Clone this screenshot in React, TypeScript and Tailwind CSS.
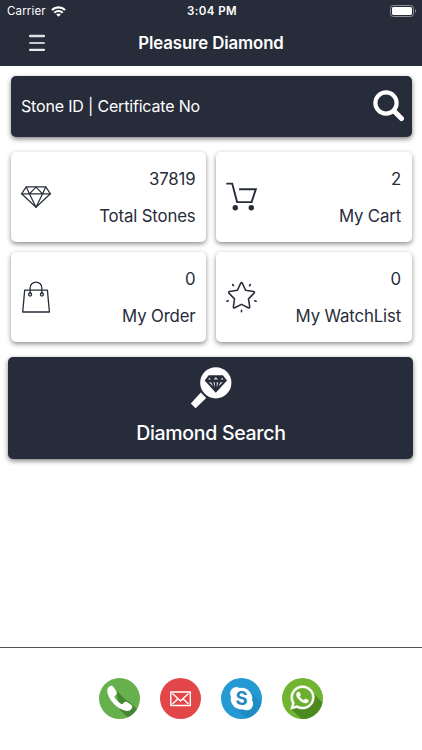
import type { ReactNode } from 'react'
import { FaWhatsapp } from 'react-icons/fa'

const DARK = '#272c3a'

const WifiIcon = () => (
  <svg width="15" height="11" viewBox="0 0 15 11" fill="none" stroke="#fff" strokeWidth="2.2">
    <path d="M.9 4.1a9.3 9.3 0 0 1 13.2 0" />
    <path d="M3.3 6.7a6 6 0 0 1 8.4 0" />
    <path d="M7.5 10.8 5.2 8.5a3.3 3.3 0 0 1 4.6 0z" fill="#fff" stroke="none" />
  </svg>
)

const BatteryIcon = () => (
  <svg width="27" height="12" viewBox="0 0 27 12" fill="none">
    <rect x="0.5" y="0.5" width="23" height="11" rx="2.8" stroke="#8b8e96" />
    <rect x="2" y="2" width="20" height="8" rx="1.4" fill="#fff" />
    <path d="M25 4v4c1.4-.5 1.4-3.5 0-4z" fill="#8b8e96" />
  </svg>
)

const MenuIcon = () => (
  <svg width="16" height="18" viewBox="0 0 16 18" stroke="#fff" strokeLinecap="round">
    <path d="M1 2h14" strokeWidth="2.4" opacity="0.85" />
    <path d="M1 9h14" strokeWidth="1.7" />
    <path d="M1 15.8h14" strokeWidth="2.2" opacity="0.9" />
  </svg>
)

const SearchIcon = () => (
  <svg width="32" height="32" viewBox="0 0 32 32" fill="none" stroke="#fff" strokeLinecap="round">
    <circle cx="13" cy="13" r="10.6" strokeWidth="4.2" />
    <path d="m21.5 21.5 7 7" strokeWidth="5" />
  </svg>
)

const DiamondIcon = () => (
  <svg width="30" height="22" viewBox="0 0 30 22" fill="none" stroke={DARK} strokeWidth="1.2" strokeLinejoin="round">
    <path d="M5.2.8h19.6l4.6 7L15 21.2.6 7.8z" />
    <path d="M.6 7.8h28.8M5.2.8l3.2 7L15 1.2l6.6 6.6 3.2-7M8.4 7.8 15 21.2l6.6-13.4" />
  </svg>
)

const CartIcon = () => (
  <svg width="31" height="29" viewBox="0 0 31 29" fill="none" stroke={DARK} strokeWidth="1.9">
    <path d="M.3 1.6h5.9l4.9 18.5h14.5l4.2-12.8H13.1" />
    <circle cx="9.3" cy="25.8" r="2.7" fill={DARK} stroke="none" />
    <circle cx="25.3" cy="25.8" r="2.7" fill={DARK} stroke="none" />
  </svg>
)

const BagIcon = () => (
  <svg width="28" height="32" viewBox="0 0 28 32" fill="none" stroke={DARK} strokeWidth="1.3">
    <path d="M2.7 9.1h22.7l2 21.9H.7z" strokeLinejoin="round" />
    <path d="M8.1 13V7a5.9 5.9 0 0 1 11.8 0v6" />
    <circle cx="8.1" cy="13.5" r="1.5" />
    <circle cx="19.9" cy="13.5" r="1.5" />
  </svg>
)

const StarIcon = () => (
  <svg width="32" height="32" viewBox="0 0 32 32" fill="none" stroke={DARK} strokeWidth="1.6" strokeLinejoin="round" strokeLinecap="round">
    <path d="M15.1 1.9q.9-1.5 1.8 0l3.4 7.2 8.1 1.2q1.6.4.6 1.7l-5.8 5.9 1.3 8.2q.1 1.5-1.5 1L16 23.6l-7 3.5q-1.5.5-1.4-1l1.2-8.2L3 12q-1-1.3.6-1.7l8.1-1.2z" />
    <path d="m6.9 3.1.8 1.3M25.1 3.1l-.8 1.3M.9 20.3l1.5-.5M31.1 20.3l-1.5-.5M16 29.8v1.3" />
  </svg>
)

const DiamondSearchIcon = () => (
  <svg width="42" height="42" viewBox="0 0 42 42" fill="none">
    <circle cx="25.8" cy="15.8" r="15.6" fill="#fff" />
    <path d="m10.8 25.5 5.4 5.4L5.6 41.2.8 36.4z" fill="#fff" />
    <path d="M18.7 8.3h14.2l4.1 5.3-11.2 12.1-11.2-12.1z" fill={DARK} />
    <path
      d="m19.3 10.7-1.2 1.7h3.1zM25.8 10l-2.3 2.4h4.6zM32.3 10.7l-1.9 1.7h3.1zM18.8 15.2h2.4l2 4.2zM23.3 15.2h1.6v5.4zM26.7 15.2h1.7l-1.7 5.4zM30.4 15.2h2.4l-4.4 4.2z"
      fill="#fff"
      opacity="0.8"
    />
  </svg>
)

const PhoneIcon = () => (
  <svg width="41" height="41" viewBox="0 0 41 41">
    <defs>
      <clipPath id="phoneClip">
        <circle cx="20.5" cy="20.5" r="20.5" />
      </clipPath>
    </defs>
    <circle cx="20.5" cy="20.5" r="20.5" fill="#67b04e" />
    <path clipPath="url(#phoneClip)" fill="#478536" d="m17 12 9.5 9.5 5.5 4 12 11-9 9-14-13.5z" />
    <path
      fill="#fff"
      d="M10.6 8.3c1.6-1 3.2-.5 4.3 1.2l2.5 4c.9 1.5.5 2.9-1 3.9-1.2.8-1.1 1.5-.3 2.7 1.5 2.3 3.2 4.1 5.4 5.5 1.2.8 2 .8 2.8-.3 1-1.5 2.3-1.9 3.9-1l3.3 2c1.9 1.2 2.3 2.6 1.2 4.2-1.8 2.7-4.7 3.2-8.5 1.6C16.5 28.9 11.5 23.3 8.8 16c-1.2-3.4-.8-6.1 1.8-7.7z"
    />
  </svg>
)

const MailIcon = () => (
  <svg width="41" height="41" viewBox="0 0 41 41" fill="none">
    <circle cx="20.5" cy="20.5" r="20.5" fill="#e24648" />
    <g stroke="#fff" strokeWidth="1.4" strokeLinejoin="round">
      <rect x="10.8" y="14" width="19.5" height="13.5" />
      <path d="m12.5 15.5 8 7.5 8-7.5M12.5 26l5.5-5.3M28.5 26 23 20.7" />
    </g>
  </svg>
)

const SkypeIcon = () => (
  <svg width="41" height="41" viewBox="0 0 41 41">
    <defs>
      <clipPath id="skypeClip">
        <circle cx="20.5" cy="20.5" r="20.5" />
      </clipPath>
    </defs>
    <circle cx="20.5" cy="20.5" r="20.5" fill="#2599d2" />
    <path clipPath="url(#skypeClip)" fill="#1f8cc6" d="m25 10 20 19v16H30L11 26z" />
    <circle cx="20.5" cy="20.6" r="10.8" fill="#fff" />
    <circle cx="15.4" cy="15.4" r="6.3" fill="#fff" />
    <circle cx="25.8" cy="26" r="6.3" fill="#fff" />
    <text x="20.5" y="27.2" textAnchor="middle" fontFamily="Inter, sans-serif" fontWeight="700" fontSize="18.5" fill="#2189bd">
      S
    </text>
  </svg>
)

const WhatsappIcon = () => (
  <div className="relative size-[41px]">
    <svg width="41" height="41" viewBox="0 0 41 41">
      <defs>
        <clipPath id="whatsappClip">
          <circle cx="20.5" cy="20.5" r="20.5" />
        </clipPath>
      </defs>
      <circle cx="20.5" cy="20.5" r="20.5" fill="#70b431" />
      <path clipPath="url(#whatsappClip)" fill="#4c8a20" d="m29 13 16 16v16H24L9 31z" />
      <circle cx="20.5" cy="20.3" r="10" fill="#6cae2f" />
    </svg>
    <FaWhatsapp className="absolute left-[7px] top-[6px] stroke-white stroke-[10] text-white" size={27} />
  </div>
)

type StatCardProps = {
  icon: ReactNode
  value: number
  label: string
}

const StatCard = ({ icon, value, label }: StatCardProps) => (
  <div className="flex h-[90px] items-center justify-between rounded-[5px] bg-white pl-[9.5px] pr-[10.5px] text-[#272c3a] shadow-[0_2px_5px_rgba(0,0,0,0.45)]">
    <div className="flex w-[31px] justify-center">{icon}</div>
    <div className="flex flex-col items-end gap-[13px] pt-[2px] text-[16.8px] leading-[24px] tracking-[-0.15px]">
      <span>{value}</span>
      <span>{label}</span>
    </div>
  </div>
)

const stats: StatCardProps[] = [
  { icon: <DiamondIcon />, value: 37819, label: 'Total Stones' },
  { icon: <CartIcon />, value: 2, label: 'My Cart' },
  { icon: <BagIcon />, value: 0, label: 'My Order' },
  { icon: <StarIcon />, value: 0, label: 'My WatchList' },
]

const Header = () => (
  <header className="h-[65.5px] bg-[#272c3a] text-white">
    <div className="grid h-[22px] grid-cols-3 items-center pl-[7px] pr-[5px] text-[11.5px]">
      <div className="flex items-center gap-[5px]">
        <span className="pt-[2px] tracking-[0.15px]">Carrier</span>
        <WifiIcon />
      </div>
      <span className="pt-[2px] text-center font-semibold tracking-[0.4px]">3:04 PM</span>
      <div className="flex justify-end">
        <BatteryIcon />
      </div>
    </div>
    <div className="grid h-[43px] grid-cols-[60px_1fr_60px] items-center">
      <button className="-mt-[2px] pl-[29px]" aria-label="Menu">
        <MenuIcon />
      </button>
      <h1 className="text-center text-[16.8px] font-semibold tracking-[-0.1px]">Pleasure Diamond</h1>
    </div>
  </header>
)

const App = () => {
  return (
    <div className="flex h-[750px] w-[422px] flex-col overflow-hidden bg-white font-['Inter',sans-serif]">
      <Header />
      <main className="flex-1 pt-[10px]">
        <div className="mx-[10.5px] flex h-[61px] items-center justify-between rounded-[5px] bg-[#272c3a] pl-[10.5px] pr-[7px] text-white shadow-[0_2px_5px_rgba(0,0,0,0.5)]">
          <span className="text-[16px] tracking-[-0.18px]">Stone ID | Certificate No</span>
          <SearchIcon />
        </div>
        <div className="mx-[10.5px] mt-[15px] grid grid-cols-2 gap-[10px]">
          {stats.map((stat) => (
            <StatCard key={stat.label} {...stat} />
          ))}
        </div>
        <button className="mx-[8.4px] mt-[15.5px] flex h-[101.5px] w-[405px] flex-col items-center rounded-[5px] bg-[#272c3a] pt-[9.5px] text-white shadow-[0_2px_5px_rgba(0,0,0,0.5)]">
          <DiamondSearchIcon />
          <span className="mt-[9px] text-[19.5px] font-medium leading-[30px] tracking-[-0.3px]">Diamond Search</span>
        </button>
      </main>
      <footer className="flex h-[103.5px] justify-center gap-[20px] border-t border-[#555] pt-[30.5px]">
        <PhoneIcon />
        <MailIcon />
        <SkypeIcon />
        <WhatsappIcon />
      </footer>
    </div>
  )
}

export default App
